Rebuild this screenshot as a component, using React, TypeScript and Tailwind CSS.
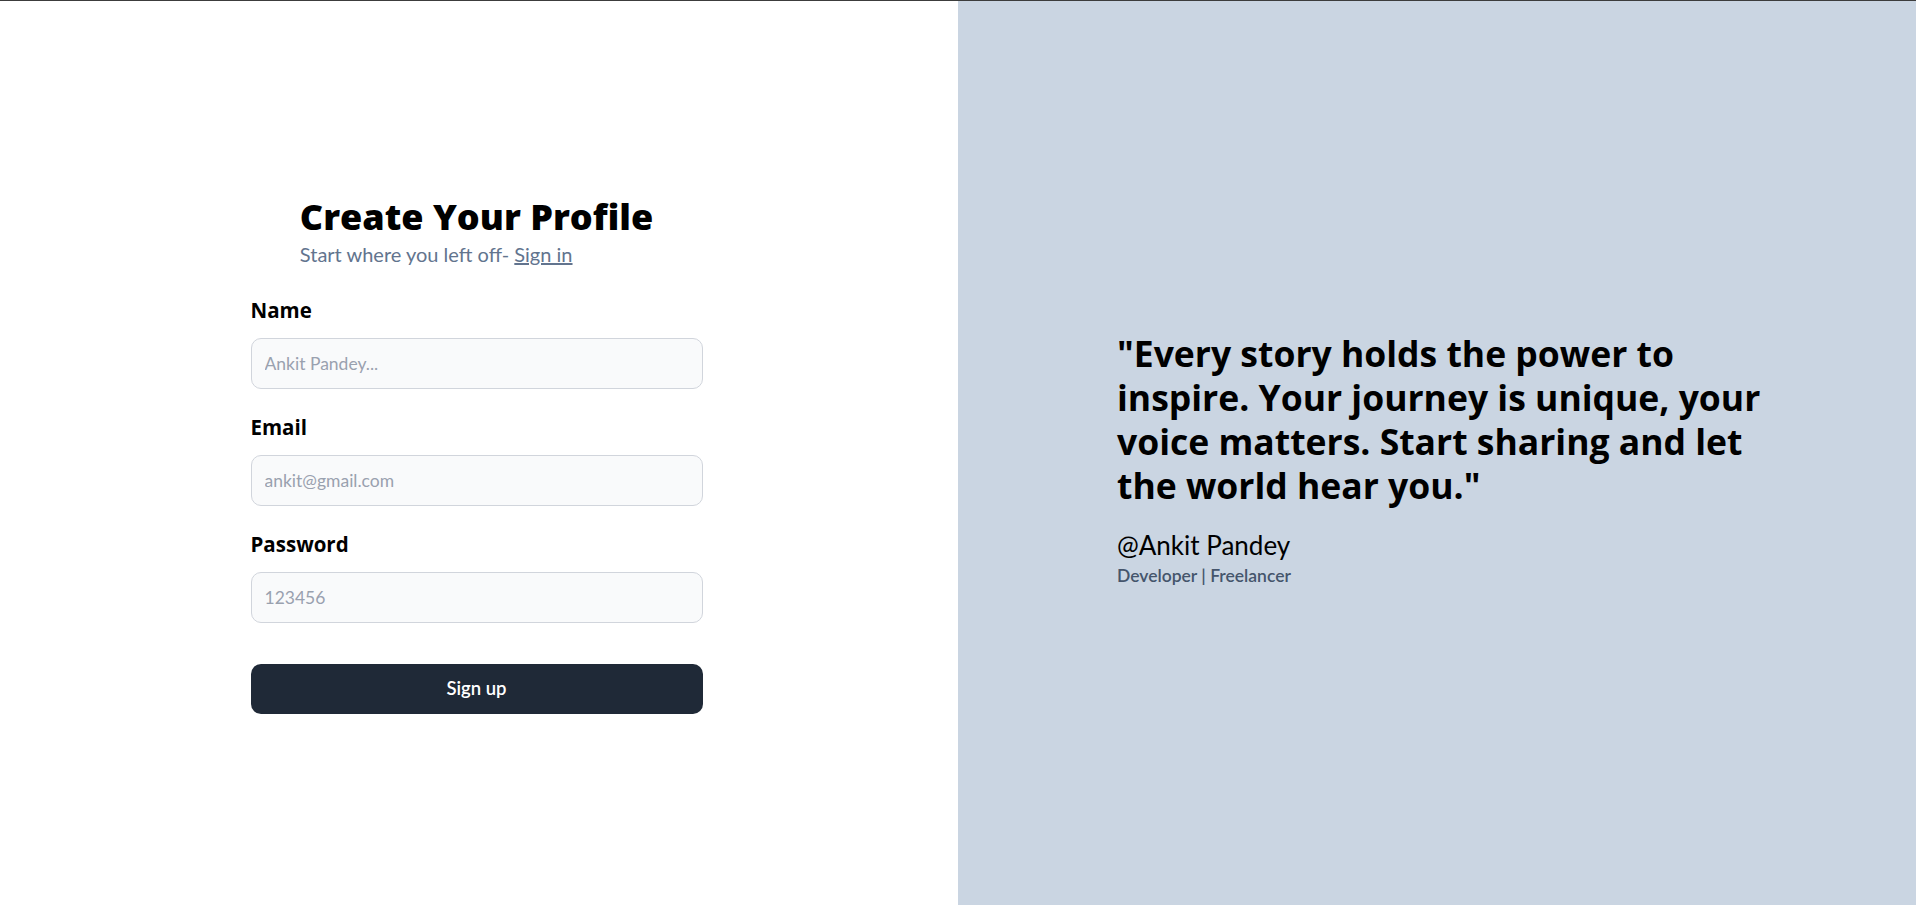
const Field = ({ label, type, placeholder }: { label: string; type: string; placeholder: string }) => {
  return (
    <div className="flex flex-col">
      <label className="font-['Open_Sans',sans-serif] text-[20.5px] leading-[28px] font-bold text-black">{label}</label>
      <input
        type={type}
        placeholder={placeholder}
        className="mt-[14px] h-[51px] w-full rounded-[10px] border border-gray-300 bg-gray-50 px-[13px] text-[17.5px] text-gray-900 outline-none placeholder:text-gray-400"
      />
    </div>
  );
};

const Auth = () => {
  return (
    <div className="flex h-full flex-col items-center justify-center bg-white pt-[5px]">
      <div className="mr-[5px] w-[452px]">
        <div className="flex justify-center">
          <div>
            <h1 className="font-['Open_Sans',sans-serif] text-[36px] leading-[40px] font-extrabold text-black">
              Create Your Profile
            </h1>
            <p className="mt-[3px] text-[20px] leading-[28px] text-slate-500">
              Start where you left off-{" "}
              <a href="#" className="underline">
                Sign in
              </a>
            </p>
          </div>
        </div>
        <form className="mt-[28px] flex flex-col gap-[24px]">
          <Field label="Name" type="text" placeholder="Ankit Pandey..." />
          <Field label="Email" type="email" placeholder="ankit@gmail.com" />
          <Field label="Password" type="password" placeholder="123456" />
          <button
            type="button"
            className="mt-[17px] h-[50px] w-full rounded-[10px] bg-[#1f2937] text-[18.5px] font-semibold text-white"
          >
            Sign up
          </button>
        </form>
      </div>
    </div>
  );
};

const Quote = () => {
  return (
    <div className="flex h-full items-center bg-slate-300 pt-[13px] pl-[159px]">
      <div className="max-w-[672px]">
        <p className="font-['Open_Sans',sans-serif] text-[35.5px] leading-[44px] font-bold text-black">
          "Every story holds the power to inspire. Your journey is unique, your voice matters. Start sharing and let the
          world hear you."
        </p>
        <p className="mt-[22px] text-[26px] leading-[32px] text-black">@Ankit Pandey</p>
        <p className="mt-[3px] text-[17.5px] leading-[24px] font-semibold text-slate-600">Developer | Freelancer</p>
      </div>
    </div>
  );
};

export default function App() {
  return (
    <div className="grid h-screen w-full grid-cols-2 border-t border-[#3c3c3c] font-['Lato',sans-serif]">
      <Auth />
      <Quote />
    </div>
  );
}
